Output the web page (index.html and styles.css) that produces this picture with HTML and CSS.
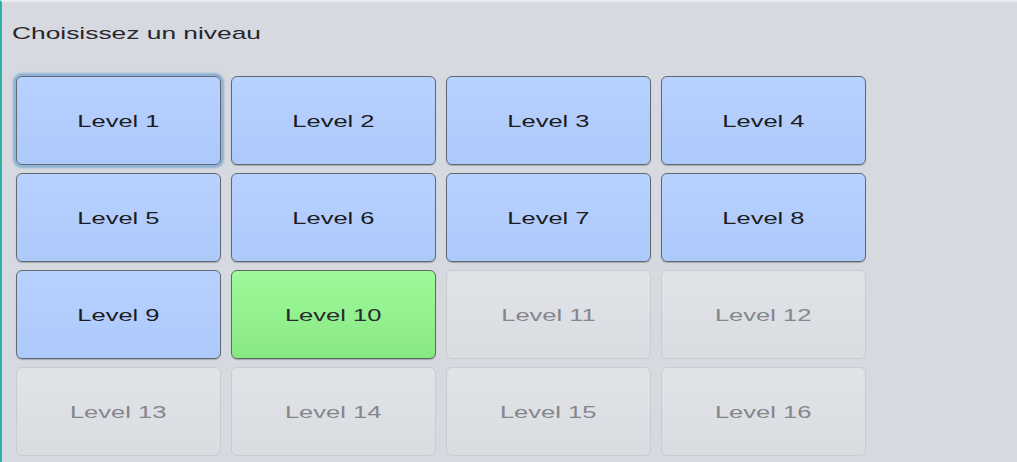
FILE: index.html
```html
<!DOCTYPE html>
<html lang="fr">
<head>
<meta charset="utf-8">
<title>Choisissez un niveau</title>
<link rel="stylesheet" href="styles.css">
</head>
<body>
<div class="panel">
  <div class="title"><span class="stretch">Choisissez un niveau</span></div>
  <div class="grid">
    <button class="lvl done focus"><span class="stretch">Level 1</span></button>
    <button class="lvl done"><span class="stretch">Level 2</span></button>
    <button class="lvl done"><span class="stretch">Level 3</span></button>
    <button class="lvl done"><span class="stretch">Level 4</span></button>
    <button class="lvl done"><span class="stretch">Level 5</span></button>
    <button class="lvl done"><span class="stretch">Level 6</span></button>
    <button class="lvl done"><span class="stretch">Level 7</span></button>
    <button class="lvl done"><span class="stretch">Level 8</span></button>
    <button class="lvl done"><span class="stretch">Level 9</span></button>
    <button class="lvl current"><span class="stretch">Level 10</span></button>
    <button class="lvl locked"><span class="stretch">Level 11</span></button>
    <button class="lvl locked"><span class="stretch">Level 12</span></button>
    <button class="lvl locked"><span class="stretch">Level 13</span></button>
    <button class="lvl locked"><span class="stretch">Level 14</span></button>
    <button class="lvl locked"><span class="stretch">Level 15</span></button>
    <button class="lvl locked"><span class="stretch">Level 16</span></button>
  </div>
</div>
</body>
</html>
```
FILE: styles.css
```css
html, body {
  margin: 0;
  padding: 0;
  height: 100%;
  background: #d6d9df;
  overflow: hidden;
}

.panel {
  box-sizing: border-box;
  height: 462px;
  border-left: 2px solid #2cb2a6;
  border-top: 2px solid #e9ebee;
  padding: 22px 0 0 0;
  font-family: "Liberation Sans", Arial, sans-serif;
}

.title {
  font-size: 17px;
  line-height: 20px;
  color: #26262c;
  padding-left: 10px;
}

.title .stretch {
  display: inline-block;
  transform: scaleX(1.55);
  transform-origin: left center;
}

.grid {
  margin-top: 32px;
  padding-left: 14px;
  display: grid;
  grid-template-columns: repeat(4, 205px);
  grid-auto-rows: 89px;
  column-gap: 10px;
  row-gap: 8px;
}

.lvl {
  box-sizing: border-box;
  margin: 0;
  padding: 2px 0 0 0;
  border-radius: 6px;
  font-family: "Liberation Sans", Arial, sans-serif;
  font-size: 17px;
  line-height: 20px;
  display: flex;
  align-items: center;
  justify-content: center;
}

.lvl .stretch {
  display: inline-block;
  transform: scaleX(1.5);
  transform-origin: center center;
}

.done {
  background: linear-gradient(#b8d2ff, #adc9fa);
  border: 1px solid #5f6873;
  box-shadow: 0 1px 1px rgba(40, 50, 70, 0.3);
  color: #1c1c22;
}

.focus {
  box-shadow: 0 0 0 1px #8fb3d9, 0 0 2px 3px rgba(110, 160, 210, 0.7);
}

.current {
  background: linear-gradient(#9efa9a, #88e884);
  border: 1px solid #5f6a5f;
  box-shadow: 0 1px 1px rgba(40, 60, 40, 0.3);
  color: #2a2a30;
}

.locked {
  background: linear-gradient(#e1e3e7, #d9dce1);
  border: 1px solid #c8cbd0;
  color: #85868c;
}
```
